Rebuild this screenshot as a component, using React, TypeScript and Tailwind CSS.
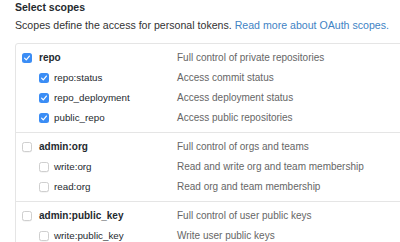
import React from "react";

type Scope = {
  name: string;
  description: string;
  checked: boolean;
  children: { name: string; description: string; checked: boolean }[];
};

const scopes: Scope[] = [
  {
    name: "repo",
    description: "Full control of private repositories",
    checked: true,
    children: [
      { name: "repo:status", description: "Access commit status", checked: true },
      { name: "repo_deployment", description: "Access deployment status", checked: true },
      { name: "public_repo", description: "Access public repositories", checked: true },
    ],
  },
  {
    name: "admin:org",
    description: "Full control of orgs and teams",
    checked: false,
    children: [
      { name: "write:org", description: "Read and write org and team membership", checked: false },
      { name: "read:org", description: "Read org and team membership", checked: false },
    ],
  },
  {
    name: "admin:public_key",
    description: "Full control of user public keys",
    checked: false,
    children: [
      { name: "write:public_key", description: "Write user public keys", checked: false },
      { name: "read:public_key", description: "Read user public keys", checked: false },
    ],
  },
];

function Checkbox({ checked }: { checked: boolean }) {
  if (checked) {
    return (
      <span className="flex h-[10px] w-[10px] shrink-0 items-center justify-center rounded-[2.5px] bg-[#3b8df5]">
        <svg viewBox="0 0 10 10" className="h-[8px] w-[8px]" fill="none">
          <path d="M2 5.2 L4.1 7.3 L8 2.6" stroke="#fff" strokeWidth="1.5" strokeLinecap="round" strokeLinejoin="round" />
        </svg>
      </span>
    );
  }
  return <span className="h-[10px] w-[10px] shrink-0 rounded-[2.5px] border border-[#cfcfcf] bg-white shadow-[0_0.5px_0.5px_rgba(0,0,0,0.08)]" />;
}

function Row({
  name,
  description,
  checked,
  top,
}: {
  name: string;
  description: string;
  checked: boolean;
  top?: boolean;
}) {
  return (
    <div className="flex h-[20px] items-center">
      <div className={`flex w-[161px] shrink-0 items-center ${top ? "gap-[7px] pl-[6px]" : "gap-[5px] pl-[23px]"}`}>
        <Checkbox checked={checked} />
        <span className={top ? "font-bold text-[#24292e]" : "text-[9.8px] text-[#24292e]"}>{name}</span>
      </div>
      <span className="whitespace-nowrap text-[#666]">{description}</span>
    </div>
  );
}

export default function App() {
  return (
    <div className="h-[242px] w-[400px] overflow-hidden bg-white px-[15px] font-['Liberation_Sans',Arial,sans-serif] text-[10px] leading-[14px]">
      <h3 className="text-[10.5px] font-bold leading-[14px] text-[#24292e]">Select scopes</h3>
      <p className="mt-[3.5px] whitespace-nowrap text-[10.6px] text-[#333]">
        Scopes define the access for personal tokens.{" "}
        <a className="text-[#4183c4]">Read more about OAuth scopes.</a>
      </p>
      <div className="mt-[11.5px] w-[420px] rounded-tl-[3px] border border-[#e5e5e5]">
        {scopes.map((s, i) => (
          <div key={s.name} className={`py-[4px] ${i > 0 ? "border-t border-[#e5e5e5]" : ""}`}>
            <Row name={s.name} description={s.description} checked={s.checked} top />
            {s.children.map((c) => (
              <Row key={c.name} name={c.name} description={c.description} checked={c.checked} />
            ))}
          </div>
        ))}
      </div>
    </div>
  );
}
